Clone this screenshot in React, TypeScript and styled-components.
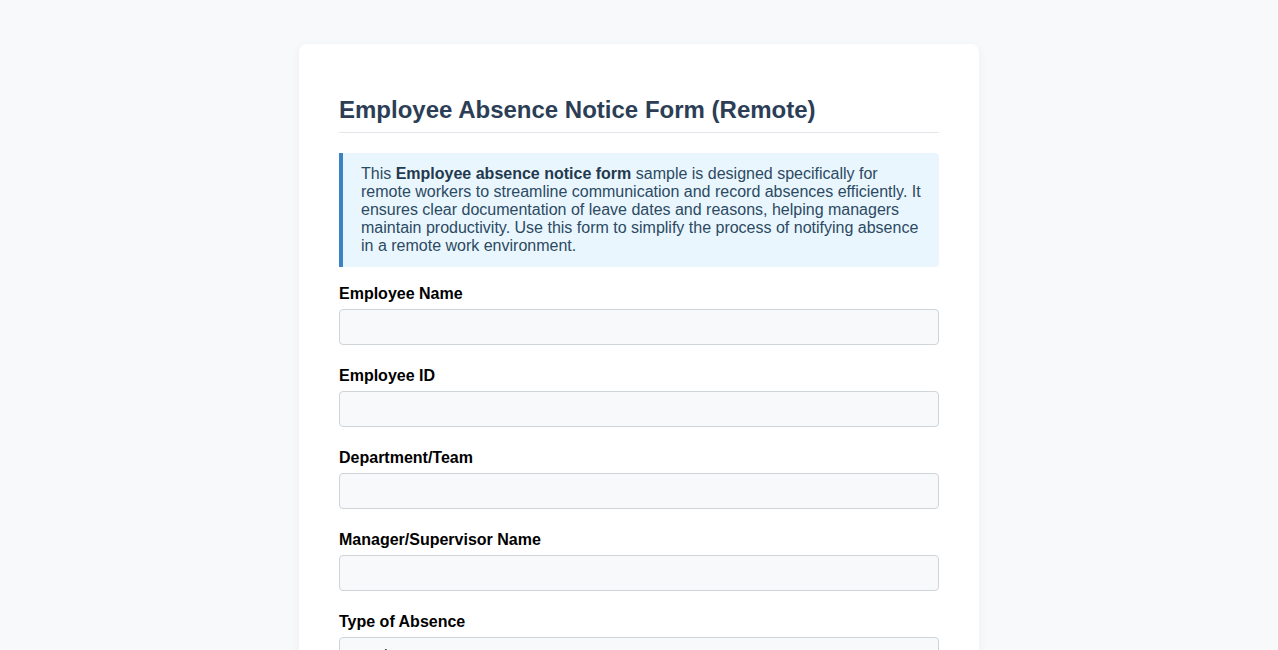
import React from "react";
import styled, { createGlobalStyle } from "styled-components";

const GlobalStyle = createGlobalStyle`
  * { box-sizing: border-box; }
  html, body { margin: 0; padding: 0; }
  body {
    background: #f7f9fb;
    font-family: "Liberation Sans", Arial, sans-serif;
    color: #000;
  }
`;

const Page = styled.div`
  padding: 44px 20px 40px;
`;

const Card = styled.main`
  width: 680px;
  margin: 0 auto;
  background: #ffffff;
  border-radius: 8px;
  box-shadow: 0 2px 10px rgba(0, 0, 0, 0.05);
  padding: 40px;
`;

const Title = styled.h1`
  margin: 12px 0 20px;
  padding-bottom: 9px;
  border-bottom: 1px solid #e3e7eb;
  font-size: 24px;
  font-weight: 700;
  line-height: 27px;
  color: #2b3e55;
`;

const Intro = styled.p`
  margin: 0 0 17px;
  padding: 12px 18px;
  background: #eaf6fd;
  border-left: 4px solid #3b82c4;
  border-radius: 0 4px 4px 0;
  font-size: 16px;
  line-height: 18px;
  color: #2b4a63;

  strong {
    font-weight: 700;
    color: #23394f;
  }
`;

const Group = styled.div`
  margin-bottom: 21px;
`;

const Label = styled.label`
  display: block;
  padding-top: 1px;
  margin-bottom: 6px;
  font-size: 16px;
  line-height: 18px;
  font-weight: 700;
  color: #000;
`;

const fieldBase = `
  display: block;
  width: 100%;
  height: 36px;
  padding: 0 10px;
  border: 1px solid #cfd4d9;
  border-radius: 4px;
  background: #f8f9fa;
  font-family: "Liberation Sans", Arial, sans-serif;
  font-size: 14px;
  color: #000;
  outline: none;
`;

const Input = styled.input`
  ${fieldBase}
`;

const Select = styled.select`
  ${fieldBase}
  padding: 0 10px;
  appearance: auto;
`;

const TextArea = styled.textarea`
  ${fieldBase}
  height: 90px;
  padding: 8px 10px;
  resize: vertical;
`;

const SubmitButton = styled.button`
  padding: 10px 22px;
  border: none;
  border-radius: 4px;
  background: #3b82c4;
  color: #fff;
  font-family: "Liberation Sans", Arial, sans-serif;
  font-size: 16px;
  font-weight: 700;
`;

const textFields = [
  { id: "name", label: "Employee Name" },
  { id: "empid", label: "Employee ID" },
  { id: "dept", label: "Department/Team" },
  { id: "manager", label: "Manager/Supervisor Name" },
];

export default function App() {
  return (
    <>
      <GlobalStyle />
      <Page>
        <Card>
          <Title>Employee Absence Notice Form (Remote)</Title>
          <Intro>
            This <strong>Employee absence notice form</strong> sample is designed specifically for
            remote workers to streamline communication and record absences efficiently. It ensures
            clear documentation of leave dates and reasons, helping managers maintain productivity.
            Use this form to simplify the process of notifying absence in a remote work environment.
          </Intro>
          {textFields.map((f) => (
            <Group key={f.id}>
              <Label htmlFor={f.id}>{f.label}</Label>
              <Input id={f.id} type="text" />
            </Group>
          ))}
          <Group>
            <Label htmlFor="type">Type of Absence</Label>
            <Select id="type" defaultValue="">
              <option value="">-- Select --</option>
              <option>Sick Leave</option>
              <option>Vacation</option>
              <option>Personal Leave</option>
              <option>Other</option>
            </Select>
          </Group>
          <Group>
            <Label htmlFor="start">Start Date</Label>
            <Input id="start" type="date" />
          </Group>
          <Group>
            <Label htmlFor="end">End Date</Label>
            <Input id="end" type="date" />
          </Group>
          <Group>
            <Label htmlFor="reason">Reason for Absence</Label>
            <TextArea id="reason" />
          </Group>
          <SubmitButton type="button">Submit Notice</SubmitButton>
        </Card>
      </Page>
    </>
  );
}
